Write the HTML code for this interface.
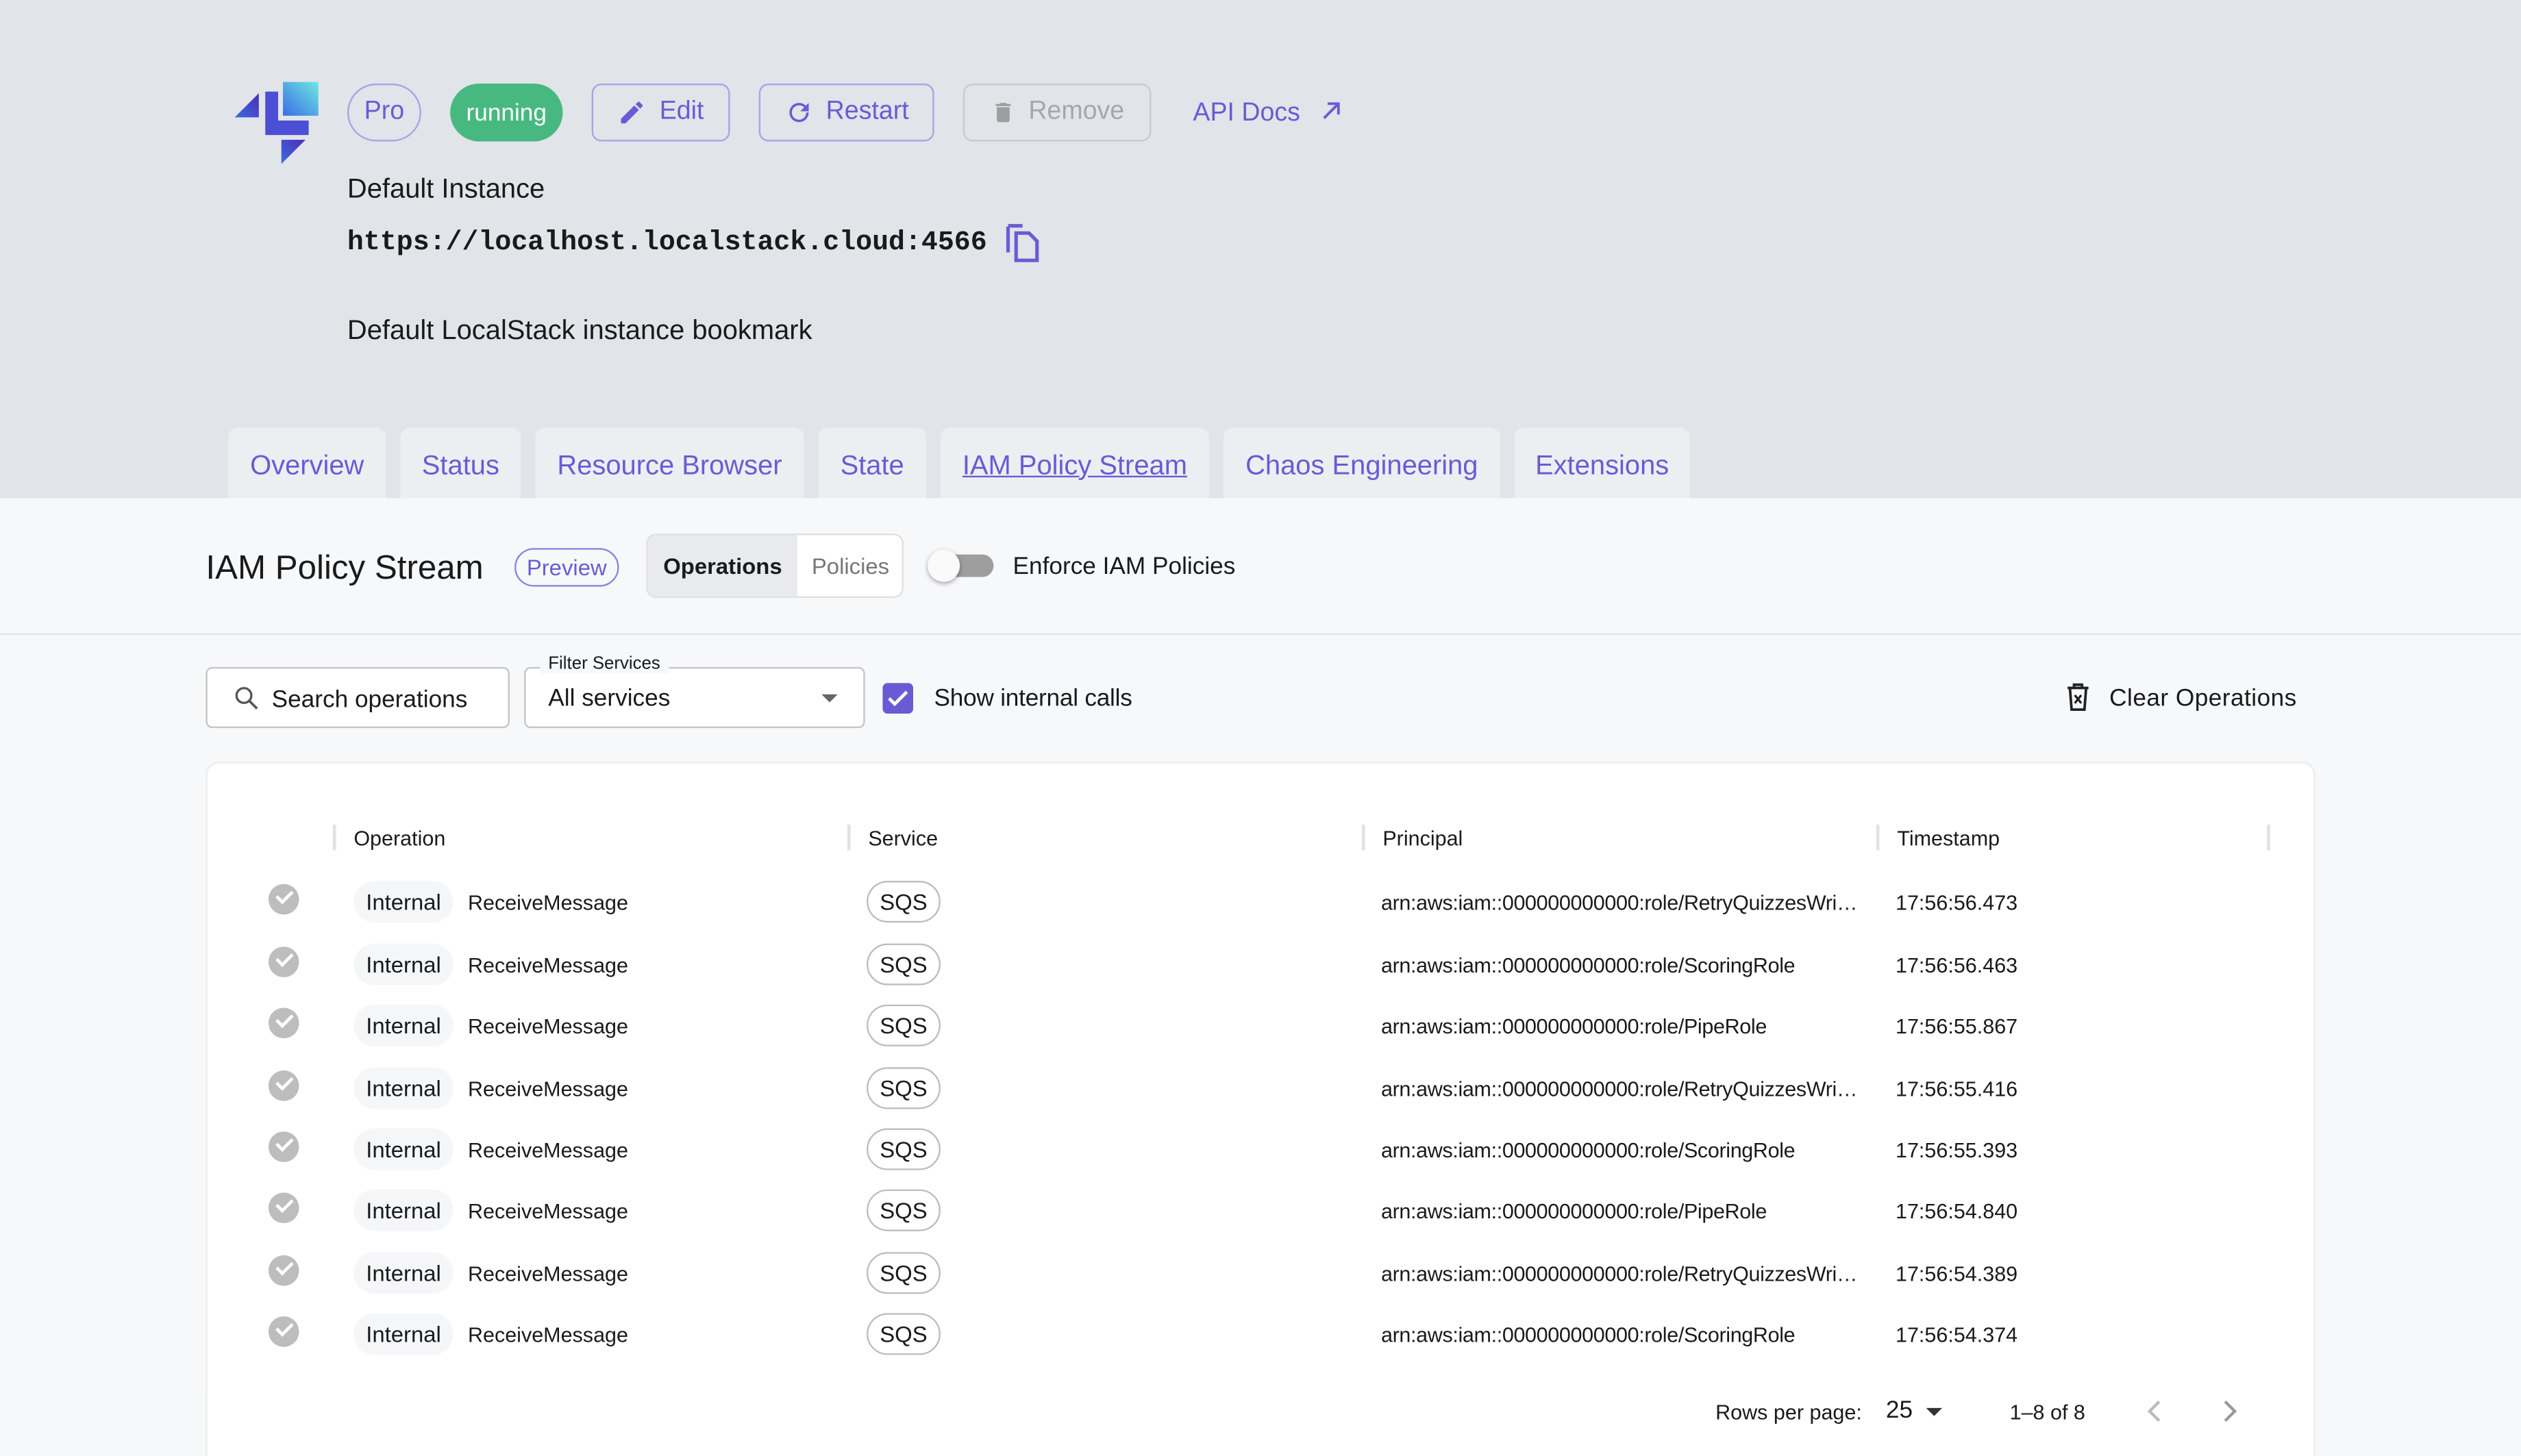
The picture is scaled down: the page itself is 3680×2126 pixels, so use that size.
<!DOCTYPE html>
<html><head><meta charset="utf-8"><style>
html,body{margin:0;padding:0;width:3680px;height:2125px;overflow:hidden;background:#f7f8fa}
#s{position:absolute;left:0;top:0;width:1568px;height:906px;overflow:hidden;transform:scale(2.3469);transform-origin:0 0;font-family:"Liberation Sans",sans-serif;color:#1a1a1a}
.a{position:absolute}
.top{left:0;top:0;width:1568px;height:310px;background:#e1e4e8}
.btn{position:absolute;top:52px;height:36px;box-sizing:border-box;border:1.5px solid #a9a2e6;border-radius:6px;color:#6a5bd4;font-size:16px;display:flex;align-items:center;justify-content:center;gap:8px}
.tab{position:absolute;top:266px;height:44px;background:#eceef2;border-radius:6px 6px 0 0;color:#6a5bd4;font-size:17px;display:flex;align-items:center;justify-content:center;padding-top:3px;box-sizing:border-box}
.hd{position:absolute;top:514px;font-size:13px}
.sep{position:absolute;top:513px;width:2px;height:16px;background:#e2e2e2}
.row{position:absolute;left:0;width:1568px;height:38px}
.row>*{position:absolute}
.chk{left:167px;top:-11px;width:19px;height:19px;border-radius:50%;background:#bdbdbd}
.chk::after{content:"";position:absolute;left:5px;top:4px;width:8px;height:4px;border-left:2px solid #fff;border-bottom:2px solid #fff;transform:rotate(-45deg)}
.int{left:220px;top:-13px;width:62px;height:26px;border-radius:13px;background:#f5f6f8;font-size:14px;line-height:27px;text-align:center}
.op{left:291px;top:-7px;font-size:13px}
.sqs{left:539px;top:-13px;width:46px;height:26px;box-sizing:border-box;border:1px solid #bdbdbd;border-radius:13px;font-size:14px;line-height:25px;text-align:center}
.pr{left:859px;top:-7px;font-size:13px;letter-spacing:-0.15px}
.ts{left:1179px;top:-7px;font-size:13px}
</style></head><body><div id="s">
<div class="a top"></div>
<svg class="a" style="left:140px;top:45px" width="64" height="62" viewBox="140 45 64 62">
<defs>
<linearGradient id="g" x1="0" y1="1" x2="1" y2="0"><stop offset="0" stop-color="#3a6ee6"/><stop offset="1" stop-color="#6ee8e0"/></linearGradient>
<linearGradient id="t" x1="0" y1="1" x2="1" y2="0"><stop offset="0" stop-color="#3f6be0"/><stop offset="1" stop-color="#4a2db8"/></linearGradient>
</defs>
<polygon points="146,73 161,58 161,73" fill="url(#t)"/>
<path d="M165,57h8v18h19v9h-27z" fill="#4c4fd6"/>
<rect x="176" y="51" width="22" height="21" fill="url(#g)"/>
<polygon points="175,87 190,87 175,102" fill="url(#t)"/>
</svg>
<div class="btn" style="left:216px;width:46px;border-radius:18px">Pro</div>
<div class="btn" style="left:280px;width:70px;border:none;border-radius:18px;background:#47b980;color:#fff;font-size:15px">running</div>
<div class="btn" style="left:368px;width:86px"><svg width="18" height="18" viewBox="0 0 24 24"><path d="M3 17.25V21h3.75L17.81 9.94l-3.75-3.75L3 17.25zM20.71 7.04a1 1 0 000-1.41l-2.34-2.34a1 1 0 00-1.41 0l-1.83 1.83 3.75 3.75 1.83-1.83z" fill="#6a5bd4"/></svg>Edit</div>
<div class="btn" style="left:472px;width:109px"><svg width="18" height="18" viewBox="0 0 24 24"><path d="M17.65 6.35A7.96 7.96 0 0012 4a8 8 0 108 8h-2a6 6 0 11-1.76-4.24L13 11h7V4l-2.35 2.35z" fill="#6a5bd4"/></svg>Restart</div>
<div class="btn" style="left:599px;width:117px;border-color:#c8cacd;color:#a5a7aa"><svg width="16" height="18" viewBox="0 0 24 24"><path d="M6 19a2 2 0 002 2h8a2 2 0 002-2V7H6v12zM19 4h-3.5l-1-1h-5l-1 1H5v2h14V4z" fill="#9e9e9e"/></svg>Remove</div>
<div class="a" style="left:742px;top:60px;font-size:16px;color:#6a5bd4">API Docs <svg width="18" height="18" viewBox="0 0 24 24" style="vertical-align:-3px;margin-left:6px"><path d="M6 18L18 6M9 6h9v9" stroke="#6a5bd4" stroke-width="2.2" fill="none"/></svg></div>
<div class="a" style="left:216px;top:108px;font-size:17px">Default Instance</div>
<div class="a" style="left:216px;top:142px;font-size:17px;font-weight:bold;font-family:'Liberation Mono',monospace">https://localhost.localstack.cloud:4566</div>
<svg class="a" style="left:625px;top:139px" width="24" height="25" viewBox="0 0 24 25"><path d="M2 2v16" stroke="#6a5bd4" stroke-width="2.2" fill="none"/><path d="M2 1.5h9" stroke="#6a5bd4" stroke-width="2.2"/><path d="M7 6h8l5 5v12H7z" stroke="#6a5bd4" stroke-width="2.2" fill="none"/></svg>
<div class="a" style="left:216px;top:196px;font-size:17px">Default LocalStack instance bookmark</div>
<div class="tab" style="left:142px;width:98px">Overview</div>
<div class="tab" style="left:249px;width:75px">Status</div>
<div class="tab" style="left:333px;width:167px">Resource Browser</div>
<div class="tab" style="left:509px;width:67px">State</div>
<div class="tab" style="left:585px;width:167px;text-decoration:underline">IAM Policy Stream</div>
<div class="tab" style="left:761px;width:172px">Chaos Engineering</div>
<div class="tab" style="left:942px;width:109px">Extensions</div>
<div class="a" style="left:128px;top:342px;font-size:21px">IAM Policy Stream</div>
<div class="a" style="left:320px;top:341px;width:65px;height:24px;box-sizing:border-box;border:1px solid #8e82e0;border-radius:12px;color:#6a5bd4;font-size:14px;line-height:22px;text-align:center">Preview</div>
<div class="a" style="left:402px;top:332px;width:160px;height:40px;box-sizing:border-box;border:1px solid #e0e0e0;border-radius:6px;background:#fff;overflow:hidden">
<div class="a" style="left:0;top:0;width:93px;height:40px;background:#e9eaed;font-weight:bold;font-size:14px;line-height:38px;text-align:center">Operations</div>
<div class="a" style="left:93px;top:0;width:66px;line-height:38px;font-size:14px;text-align:center;color:#777">Policies</div></div>
<div class="a" style="left:582px;top:345px;width:36px;height:14px;border-radius:7px;background:#9e9e9e"></div>
<div class="a" style="left:577px;top:342px;width:20px;height:20px;border-radius:50%;background:#fafafa;box-shadow:0 1px 3px rgba(0,0,0,.35)"></div>
<div class="a" style="left:630px;top:344px;font-size:15px">Enforce IAM Policies</div>
<div class="a" style="left:0;top:394px;width:1568px;height:1px;background:#e3e5e8"></div>
<div class="a" style="left:128px;top:415px;width:189px;height:38px;box-sizing:border-box;border:1px solid #c4c4c4;border-radius:4px;background:#fff"></div>
<svg class="a" style="left:145px;top:426px" width="17" height="17" viewBox="0 0 24 24"><circle cx="9.5" cy="9.5" r="6.5" stroke="#555" stroke-width="2" fill="none"/><path d="M14.5 14.5L21 21" stroke="#555" stroke-width="2.2"/></svg>
<div class="a" style="left:169px;top:427px;font-size:15px">Search operations</div>
<div class="a" style="left:326px;top:415px;width:212px;height:38px;box-sizing:border-box;border:1px solid #c4c4c4;border-radius:4px;background:#fff"></div>
<div class="a" style="left:336px;top:407px;padding:0 5px;font-size:11px;background:#f7f8fa">Filter Services</div>
<div class="a" style="left:341px;top:426px;font-size:15px">All services</div>
<div class="a" style="left:511px;top:432px;width:0;height:0;border-left:5px solid transparent;border-right:5px solid transparent;border-top:5px solid #666"></div>
<div class="a" style="left:549px;top:425px;width:19px;height:19px;border-radius:3px;background:#6a5bd4"></div>
<svg class="a" style="left:549px;top:425px" width="19" height="19" viewBox="0 0 19 19"><path d="M4 9.5l3.5 3.5L15 5.5" stroke="#fff" stroke-width="2" fill="none"/></svg>
<div class="a" style="left:581px;top:426px;font-size:15px;letter-spacing:-0.1px">Show internal calls</div>
<svg class="a" style="left:1285px;top:425px" width="15" height="18" viewBox="0 0 15 18"><path d="M1 3h13M5 3V1h5v2M2.5 3.5l1 13h8l1-13" stroke="#222" stroke-width="1.6" fill="none"/><path d="M5.5 7.5l4 5M9.5 7.5l-4 5" stroke="#222" stroke-width="1.4"/></svg>
<div class="a" style="left:1312px;top:426px;font-size:15px;letter-spacing:0.2px">Clear Operations</div>
<div class="a" style="left:128px;top:474px;width:1312px;height:460px;background:#fff;border:1px solid #ececec;border-radius:8px;box-sizing:border-box"></div>
<div class="sep" style="left:207px"></div><div class="sep" style="left:527px"></div><div class="sep" style="left:847px"></div><div class="sep" style="left:1167px"></div><div class="sep" style="left:1410px"></div>
<div class="hd" style="left:220px">Operation</div><div class="hd" style="left:540px">Service</div><div class="hd" style="left:860px">Principal</div><div class="hd" style="left:1180px">Timestamp</div>
<div class="row" style="top:561px"><div class="chk"></div><div class="int">Internal</div><div class="op">ReceiveMessage</div><div class="sqs">SQS</div><div class="pr">arn:aws:iam::000000000000:role/RetryQuizzesWri…</div><div class="ts">17:56:56.473</div></div>
<div class="row" style="top:600px"><div class="chk"></div><div class="int">Internal</div><div class="op">ReceiveMessage</div><div class="sqs">SQS</div><div class="pr">arn:aws:iam::000000000000:role/ScoringRole</div><div class="ts">17:56:56.463</div></div>
<div class="row" style="top:638px"><div class="chk"></div><div class="int">Internal</div><div class="op">ReceiveMessage</div><div class="sqs">SQS</div><div class="pr">arn:aws:iam::000000000000:role/PipeRole</div><div class="ts">17:56:55.867</div></div>
<div class="row" style="top:677px"><div class="chk"></div><div class="int">Internal</div><div class="op">ReceiveMessage</div><div class="sqs">SQS</div><div class="pr">arn:aws:iam::000000000000:role/RetryQuizzesWri…</div><div class="ts">17:56:55.416</div></div>
<div class="row" style="top:715px"><div class="chk"></div><div class="int">Internal</div><div class="op">ReceiveMessage</div><div class="sqs">SQS</div><div class="pr">arn:aws:iam::000000000000:role/ScoringRole</div><div class="ts">17:56:55.393</div></div>
<div class="row" style="top:753px"><div class="chk"></div><div class="int">Internal</div><div class="op">ReceiveMessage</div><div class="sqs">SQS</div><div class="pr">arn:aws:iam::000000000000:role/PipeRole</div><div class="ts">17:56:54.840</div></div>
<div class="row" style="top:792px"><div class="chk"></div><div class="int">Internal</div><div class="op">ReceiveMessage</div><div class="sqs">SQS</div><div class="pr">arn:aws:iam::000000000000:role/RetryQuizzesWri…</div><div class="ts">17:56:54.389</div></div>
<div class="row" style="top:830px"><div class="chk"></div><div class="int">Internal</div><div class="op">ReceiveMessage</div><div class="sqs">SQS</div><div class="pr">arn:aws:iam::000000000000:role/ScoringRole</div><div class="ts">17:56:54.374</div></div>
<div class="a" style="left:1067px;top:871px;font-size:13px">Rows per page:</div>
<div class="a" style="left:1173px;top:869px;font-size:15px">25</div>
<div class="a" style="left:1198px;top:876px;width:0;height:0;border-left:5px solid transparent;border-right:5px solid transparent;border-top:5px solid #333"></div>
<div class="a" style="left:1250px;top:871px;font-size:13px">1–8 of 8</div>
<svg class="a" style="left:1333px;top:870px" width="14" height="16" viewBox="0 0 14 16"><path d="M10 2L4 8l6 6" stroke="#bbb" stroke-width="1.8" fill="none"/></svg>
<svg class="a" style="left:1380px;top:870px" width="14" height="16" viewBox="0 0 14 16"><path d="M4 2l6 6-6 6" stroke="#999" stroke-width="1.8" fill="none"/></svg>
</div>
</body></html>
